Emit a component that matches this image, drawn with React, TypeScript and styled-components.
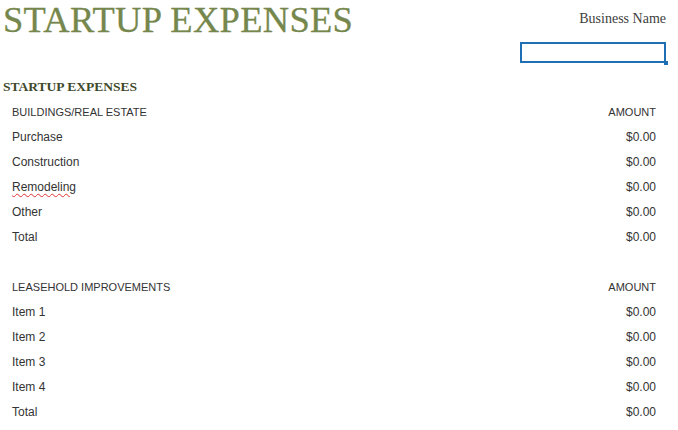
import React from "react";
import styled, { createGlobalStyle } from "styled-components";

const Global = createGlobalStyle`
  html, body { margin: 0; padding: 0; background: #fff; }
  body { font-family: "Liberation Sans", Arial, sans-serif; }
`;

const Page = styled.div`
  width: 678px;
  height: 430px;
  overflow: hidden;
  position: relative;
`;

const TopBar = styled.div`
  display: flex;
  justify-content: space-between;
  align-items: flex-start;
  height: 40px;
  padding: 0 12px 0 3px;
`;

const Title = styled.h1`
  margin: 2px 0 0;
  font-family: "Liberation Serif", "Times New Roman", serif;
  font-weight: normal;
  font-size: 36.5px;
  line-height: 36px;
  color: #76874d;
  letter-spacing: 0.3px;
  -webkit-text-stroke: 0.3px #76874d;
`;

const BizBlock = styled.div`
  display: flex;
  flex-direction: column;
  align-items: flex-end;
`;

const BizLabel = styled.div`
  font-family: "Liberation Serif", Georgia, serif;
  font-size: 14px;
  line-height: 16px;
  margin-top: 11px;
  color: #404040;
`;

const SelectedCell = styled.div`
  margin-top: 15px;
  width: 142px;
  height: 17px;
  border: 2px solid #1f6fb5;
  position: relative;
  &::after {
    content: "";
    position: absolute;
    right: -4px;
    bottom: -4px;
    width: 4px;
    height: 4px;
    background: #1f6fb5;
  }
`;

const Section = styled.div`
  margin-top: 34px;
`;

const SectionTitle = styled.div`
  height: 25px;
  display: flex;
  align-items: center;
  padding-left: 3px;
  font-family: "Liberation Serif", Georgia, serif;
  font-weight: bold;
  font-size: 13.5px;
  color: #3e4a2a;
`;

const Row = styled.div<{ $header?: boolean }>`
  height: 25px;
  display: flex;
  align-items: center;
  justify-content: space-between;
  padding: 0 22px 0 12px;
  font-size: ${(p) => (p.$header ? "11px" : "12px")};
  color: #333;
`;

const Spacer = styled.div`
  height: 25px;
`;

const Squiggle = styled.span`
  text-decoration: underline wavy #e03030;
  text-decoration-thickness: 1px;
  text-underline-offset: 2px;
`;

const groups = [
  {
    head: "BUILDINGS/REAL ESTATE",
    items: ["Purchase", "Construction", "Remodeling", "Other", "Total"],
  },
  {
    head: "LEASEHOLD IMPROVEMENTS",
    items: ["Item 1", "Item 2", "Item 3", "Item 4", "Total"],
  },
];

export default function App() {
  return (
    <Page>
      <Global />
      <TopBar>
        <Title>STARTUP EXPENSES</Title>
        <BizBlock>
          <BizLabel>Business Name</BizLabel>
          <SelectedCell />
        </BizBlock>
      </TopBar>
      <Section>
        <SectionTitle>STARTUP EXPENSES</SectionTitle>
        {groups.map((g, gi) => (
          <React.Fragment key={g.head}>
            {gi > 0 && <Spacer />}
            <Row $header>
              <span>{g.head}</span>
              <span>AMOUNT</span>
            </Row>
            {g.items.map((it, i) => (
              <Row key={i}>
                <span>{it === "Remodeling" ? <Squiggle>{it}</Squiggle> : it}</span>
                <span>$0.00</span>
              </Row>
            ))}
          </React.Fragment>
        ))}
      </Section>
    </Page>
  );
}
